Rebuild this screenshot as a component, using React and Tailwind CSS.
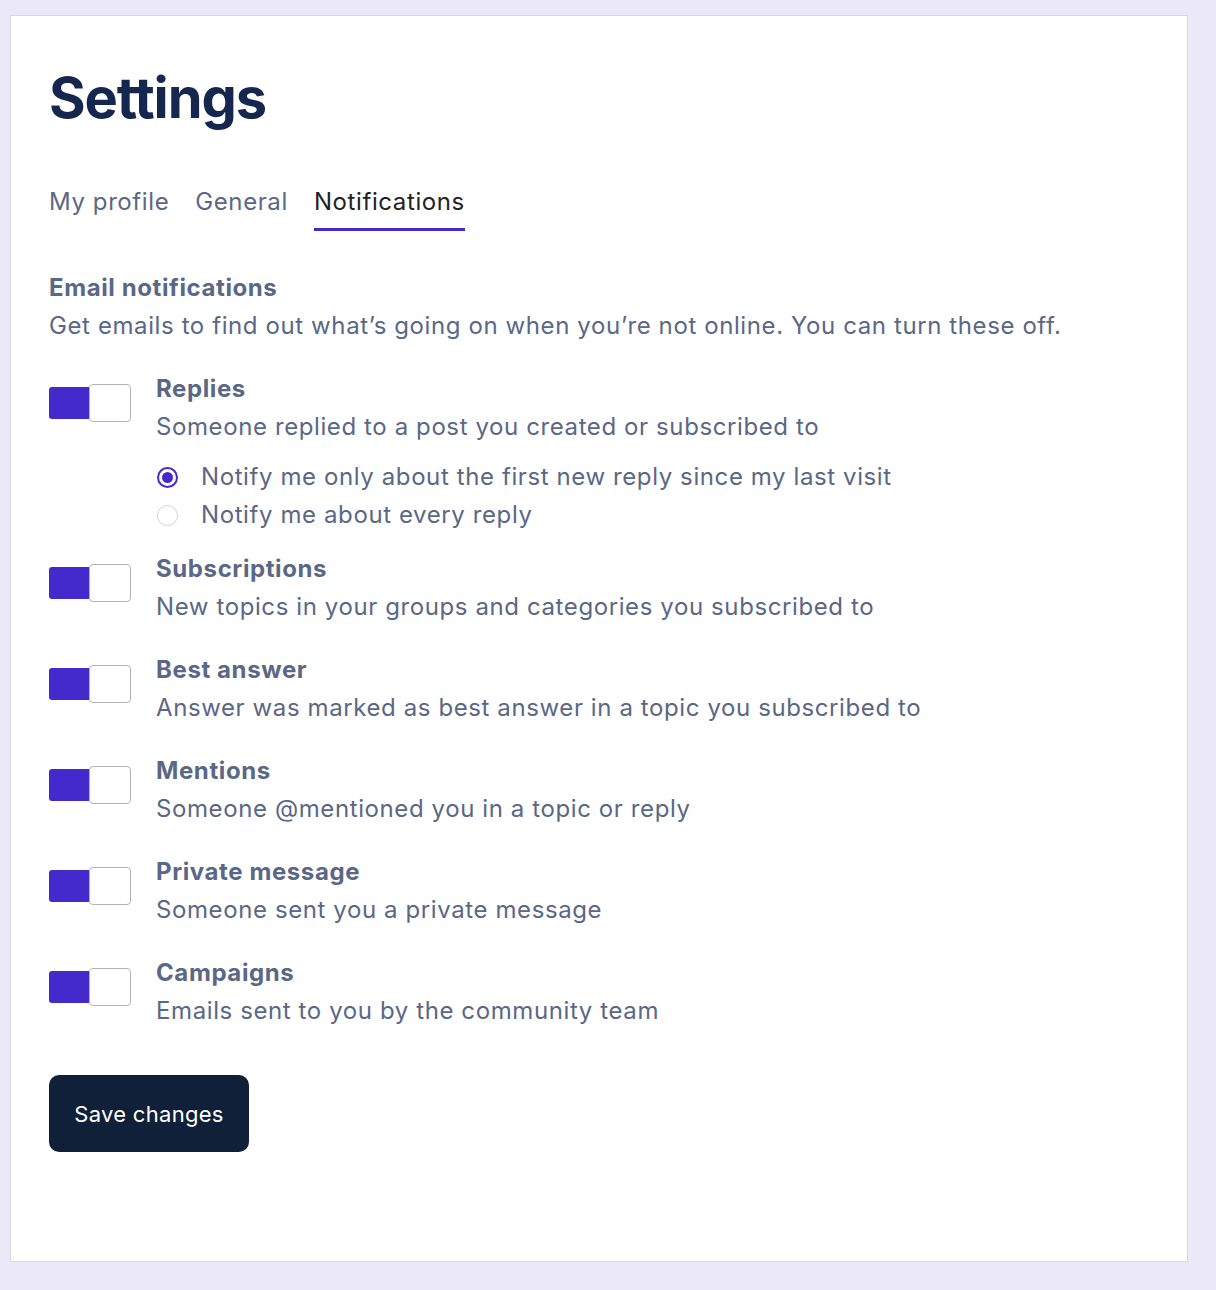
import React, { useState } from 'react';

const items = [
    { key: 'replies', title: 'Replies', text: 'Someone replied to a post you created or subscribed to', radios: true },
    { key: 'subs', title: 'Subscriptions', text: 'New topics in your groups and categories you subscribed to' },
    { key: 'best', title: 'Best answer', text: 'Answer was marked as best answer in a topic you subscribed to' },
    { key: 'mentions', title: 'Mentions', text: 'Someone @mentioned you in a topic or reply' },
    { key: 'pm', title: 'Private message', text: 'Someone sent you a private message' },
    { key: 'campaigns', title: 'Campaigns', text: 'Emails sent to you by the community team' },
];

const Toggle = ({ on, onClick }) => (
    <button onClick={onClick} className="mt-[14px] flex h-[38px] w-[82px] shrink-0 items-center">
        <span className={`h-[32px] w-[40px] rounded-l-[3px] ${on ? 'bg-[#4429cc]' : 'bg-[#e5e7eb]'}`}></span>
        <span className="h-[38px] w-[42px] rounded-[4px] border border-[#b3b3b3] bg-white"></span>
    </button>
);

const Radio = ({ checked, label, onClick }) => (
    <label onClick={onClick} className="flex h-[38px] cursor-pointer items-center gap-[23px]">
        <span
            className={`flex h-[21px] w-[21px] items-center justify-center rounded-full ${checked ? 'border-2 border-[#4429cc]' : 'border-[1.5px] border-[#d4d4d4]'}`}
        >
            {checked && <span className="h-[11px] w-[11px] rounded-full bg-[#4429cc]"></span>}
        </span>
        <span>{label}</span>
    </label>
);

export default function App() {
    const [toggles, setToggles] = useState(Object.fromEntries(items.map((i) => [i.key, true])));
    const [replyMode, setReplyMode] = useState('first');
    const [tab, setTab] = useState('Notifications');

    return (
        <div className="min-h-[1290px] bg-[#ebe8f8] pt-[15px] pl-[10px]" style={{ fontFamily: 'Inter, "Noto Sans", sans-serif' }}>
            <div className="h-[1247px] w-[1178px] border border-[#d8d6df] bg-white pl-[38px] pt-[49px]">
                <h1 className="text-[56px] leading-[67px] font-bold tracking-[-0.02em] text-[#15264f]">Settings</h1>

                {/* Tabs */}
                <div className="mt-[51px] flex gap-[26px] text-[24px] leading-[38px] tracking-[0.6px]">
                    {['My profile', 'General', 'Notifications'].map((t) => (
                        <button
                            key={t}
                            onClick={() => setTab(t)}
                            className={`border-b-[3px] pb-[7px] ${tab === t ? 'border-[#4429cc] text-[#222222]' : 'border-transparent text-[#5a6785]'}`}
                        >
                            {t}
                        </button>
                    ))}
                </div>

                <div className="mt-[38px] text-[24px] leading-[38px] tracking-[0.6px] text-[#5a6785]">
                    <h2 className="font-bold">Email notifications</h2>
                    <p>Get emails to find out what’s going on when you’re not online. You can turn these off.</p>

                    <div className="mt-[25px] flex flex-col gap-[25px]">
                        {items.map((item) => (
                            <div key={item.key} className="flex gap-[25px]">
                                <Toggle
                                    on={toggles[item.key]}
                                    onClick={() => setToggles({ ...toggles, [item.key]: !toggles[item.key] })}
                                />
                                <div>
                                    <h3 className="font-bold">{item.title}</h3>
                                    <p>{item.text}</p>
                                    {item.radios && (
                                        <div className="mt-[12px] -mb-[9px] flex flex-col pl-[1px]">
                                            <Radio
                                                checked={replyMode === 'first'}
                                                label="Notify me only about the first new reply since my last visit"
                                                onClick={() => setReplyMode('first')}
                                            />
                                            <Radio
                                                checked={replyMode === 'every'}
                                                label="Notify me about every reply"
                                                onClick={() => setReplyMode('every')}
                                            />
                                        </div>
                                    )}
                                </div>
                            </div>
                        ))}
                    </div>

                    <button className="mt-[45px] h-[77px] w-[200px] rounded-[10px] bg-[#0f2038] text-[22px] tracking-[0.3px] text-white">
                        Save changes
                    </button>
                </div>
            </div>
        </div>
    );
}
